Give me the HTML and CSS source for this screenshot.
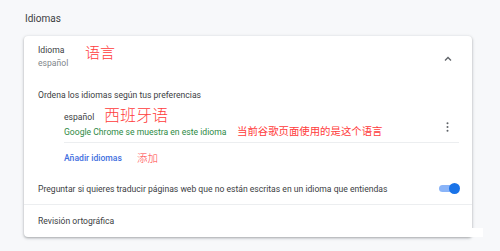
FILE: index.html
```html
<!DOCTYPE html>
<html lang="es">
<head>
    <meta charset="UTF-8">
    <meta name="viewport" content="width=device-width, initial-scale=1.0">
    <title>Idiomas</title>
    <link rel="stylesheet" href="styles.css">
</head>
<body>
    <div class="page">
        <h2 class="section-title">Idiomas</h2>

        <div class="card">
            <div class="lang-head">
                <div class="lang-head-text">
                    <span class="label">Idioma</span>
                    <span class="sublabel">español</span>
                </div>
                <span class="note note-lang">语言</span>
                <svg class="chevron" width="8" height="5" viewBox="0 0 8 5">
                    <path d="M1 4.5 L4 1.5 L7 4.5" fill="none" stroke="#5f6368" stroke-width="1.3"/>
                </svg>
            </div>

            <p class="order-title">Ordena los idiomas según tus preferencias</p>

            <div class="lang-list">
                <div class="lang-item">
                    <div class="lang-item-text">
                        <span class="lang-name">español</span>
                        <span class="lang-note">Google Chrome se muestra en este idioma</span>
                    </div>
                    <span class="note note-spanish">西班牙语</span>
                    <span class="note note-current">当前谷歌页面使用的是这个语言</span>
                    <svg class="kebab" width="3" height="10" viewBox="0 0 3 10">
                        <circle cx="1.5" cy="1.3" r="1" fill="#5f6368"/>
                        <circle cx="1.5" cy="5" r="1" fill="#5f6368"/>
                        <circle cx="1.5" cy="8.7" r="1" fill="#5f6368"/>
                    </svg>
                </div>
                <div class="add-row">
                    <a href="#" class="add-link">Añadir idiomas</a>
                    <span class="note note-add">添加</span>
                </div>
            </div>

            <div class="translate-row">
                <span class="label">Preguntar si quieres traducir páginas web que no están escritas en un idioma que entiendas</span>
                <div class="toggle">
                    <div class="toggle-track"></div>
                    <div class="toggle-knob"></div>
                </div>
            </div>

            <div class="spell-row">
                <span class="label">Revisión ortográfica</span>
            </div>
        </div>
    </div>
</body>
</html>
```

FILE: styles.css
```css
*{
    margin: 0;
    padding: 0;
    box-sizing: border-box;
}

body{
    font-family: Roboto, "Liberation Sans", sans-serif;
    background: #f7f8fa;
    color: #202124;
}

.page{
    width: 500px;
    height: 251px;
    padding: 12px 0 0 24px;
}

.section-title{
    font-size: 10px;
    font-weight: 400;
    line-height: 13px;
    height: 24px;
    padding-left: 1px;
    color: #3c4043;
}

.card{
    position: relative;
    width: 448px;
    height: 201px;
    background: #fff;
    border-radius: 4px;
    box-shadow: 0 1px 2px rgba(60, 64, 67, .28), 0 1px 3px 1px rgba(60, 64, 67, .14);
    font-size: 8.6px;
}

.card::after{
    content: "";
    position: absolute;
    right: -11px;
    bottom: 0;
    width: 120px;
    height: 9px;
    background: #fff;
}

.label{
    color: #3c4043;
}

.note{
    position: absolute;
    color: #ff3b3b;
    font-family: "Noto Sans CJK SC", sans-serif;
    font-weight: 300;
    white-space: nowrap;
}

.lang-head{
    position: relative;
    height: 40px;
    padding: 8px 20px 0 14px;
    display: flex;
    justify-content: space-between;
}

.lang-head-text{
    display: flex;
    flex-direction: column;
    line-height: 12.5px;
}

.sublabel{
    color: #80868b;
}

.note-lang{
    left: 61px;
    top: 6px;
    font-size: 15px;
    line-height: 20px;
}

.chevron{
    margin-top: 12px;
}

.order-title{
    padding: 12.5px 0 0 14px;
    height: 25px;
    line-height: 12px;
    color: #3c4043;
}

.lang-list{
    padding: 0 13px 0 40px;
}

.lang-item{
    position: relative;
    display: flex;
    justify-content: space-between;
    padding-top: 10px;
    height: 42px;
    border-bottom: 1px solid #eceef0;
}

.lang-item-text{
    display: flex;
    flex-direction: column;
    gap: 3px;
    line-height: 12px;
}

.lang-name{
    color: #3c4043;
}

.lang-note{
    color: #2e8a45;
}

.note-spanish{
    left: 40px;
    top: 3px;
    font-size: 16px;
    line-height: 20px;
}

.note-current{
    left: 173px;
    top: 23px;
    font-size: 10.4px;
    line-height: 14px;
    font-weight: 400;
}

.kebab{
    margin: 11px 10px 0 0;
}

.add-row{
    position: relative;
    padding-top: 9px;
    height: 30px;
    line-height: 12px;
}

.add-link{
    color: #3f6fe0;
    text-decoration: none;
    font-weight: 500;
}

.note-add{
    left: 73px;
    top: 7px;
    font-size: 10.5px;
    line-height: 16px;
}

.translate-row{
    height: 32px;
    padding: 0 13px 0 14px;
    display: flex;
    align-items: center;
    justify-content: space-between;
    border-bottom: 1px solid #eceef0;
}

.toggle{
    position: relative;
    width: 20px;
    height: 10px;
}

.toggle-track{
    position: absolute;
    left: 0;
    top: 1.5px;
    width: 20px;
    height: 7px;
    border-radius: 4px;
    background: #8ab4f8;
}

.toggle-knob{
    position: absolute;
    right: -1px;
    top: -0.5px;
    width: 11px;
    height: 11px;
    border-radius: 50%;
    background: #1a73e8;
}

.spell-row{
    height: 31px;
    padding-left: 14px;
    display: flex;
    align-items: center;
}
```
